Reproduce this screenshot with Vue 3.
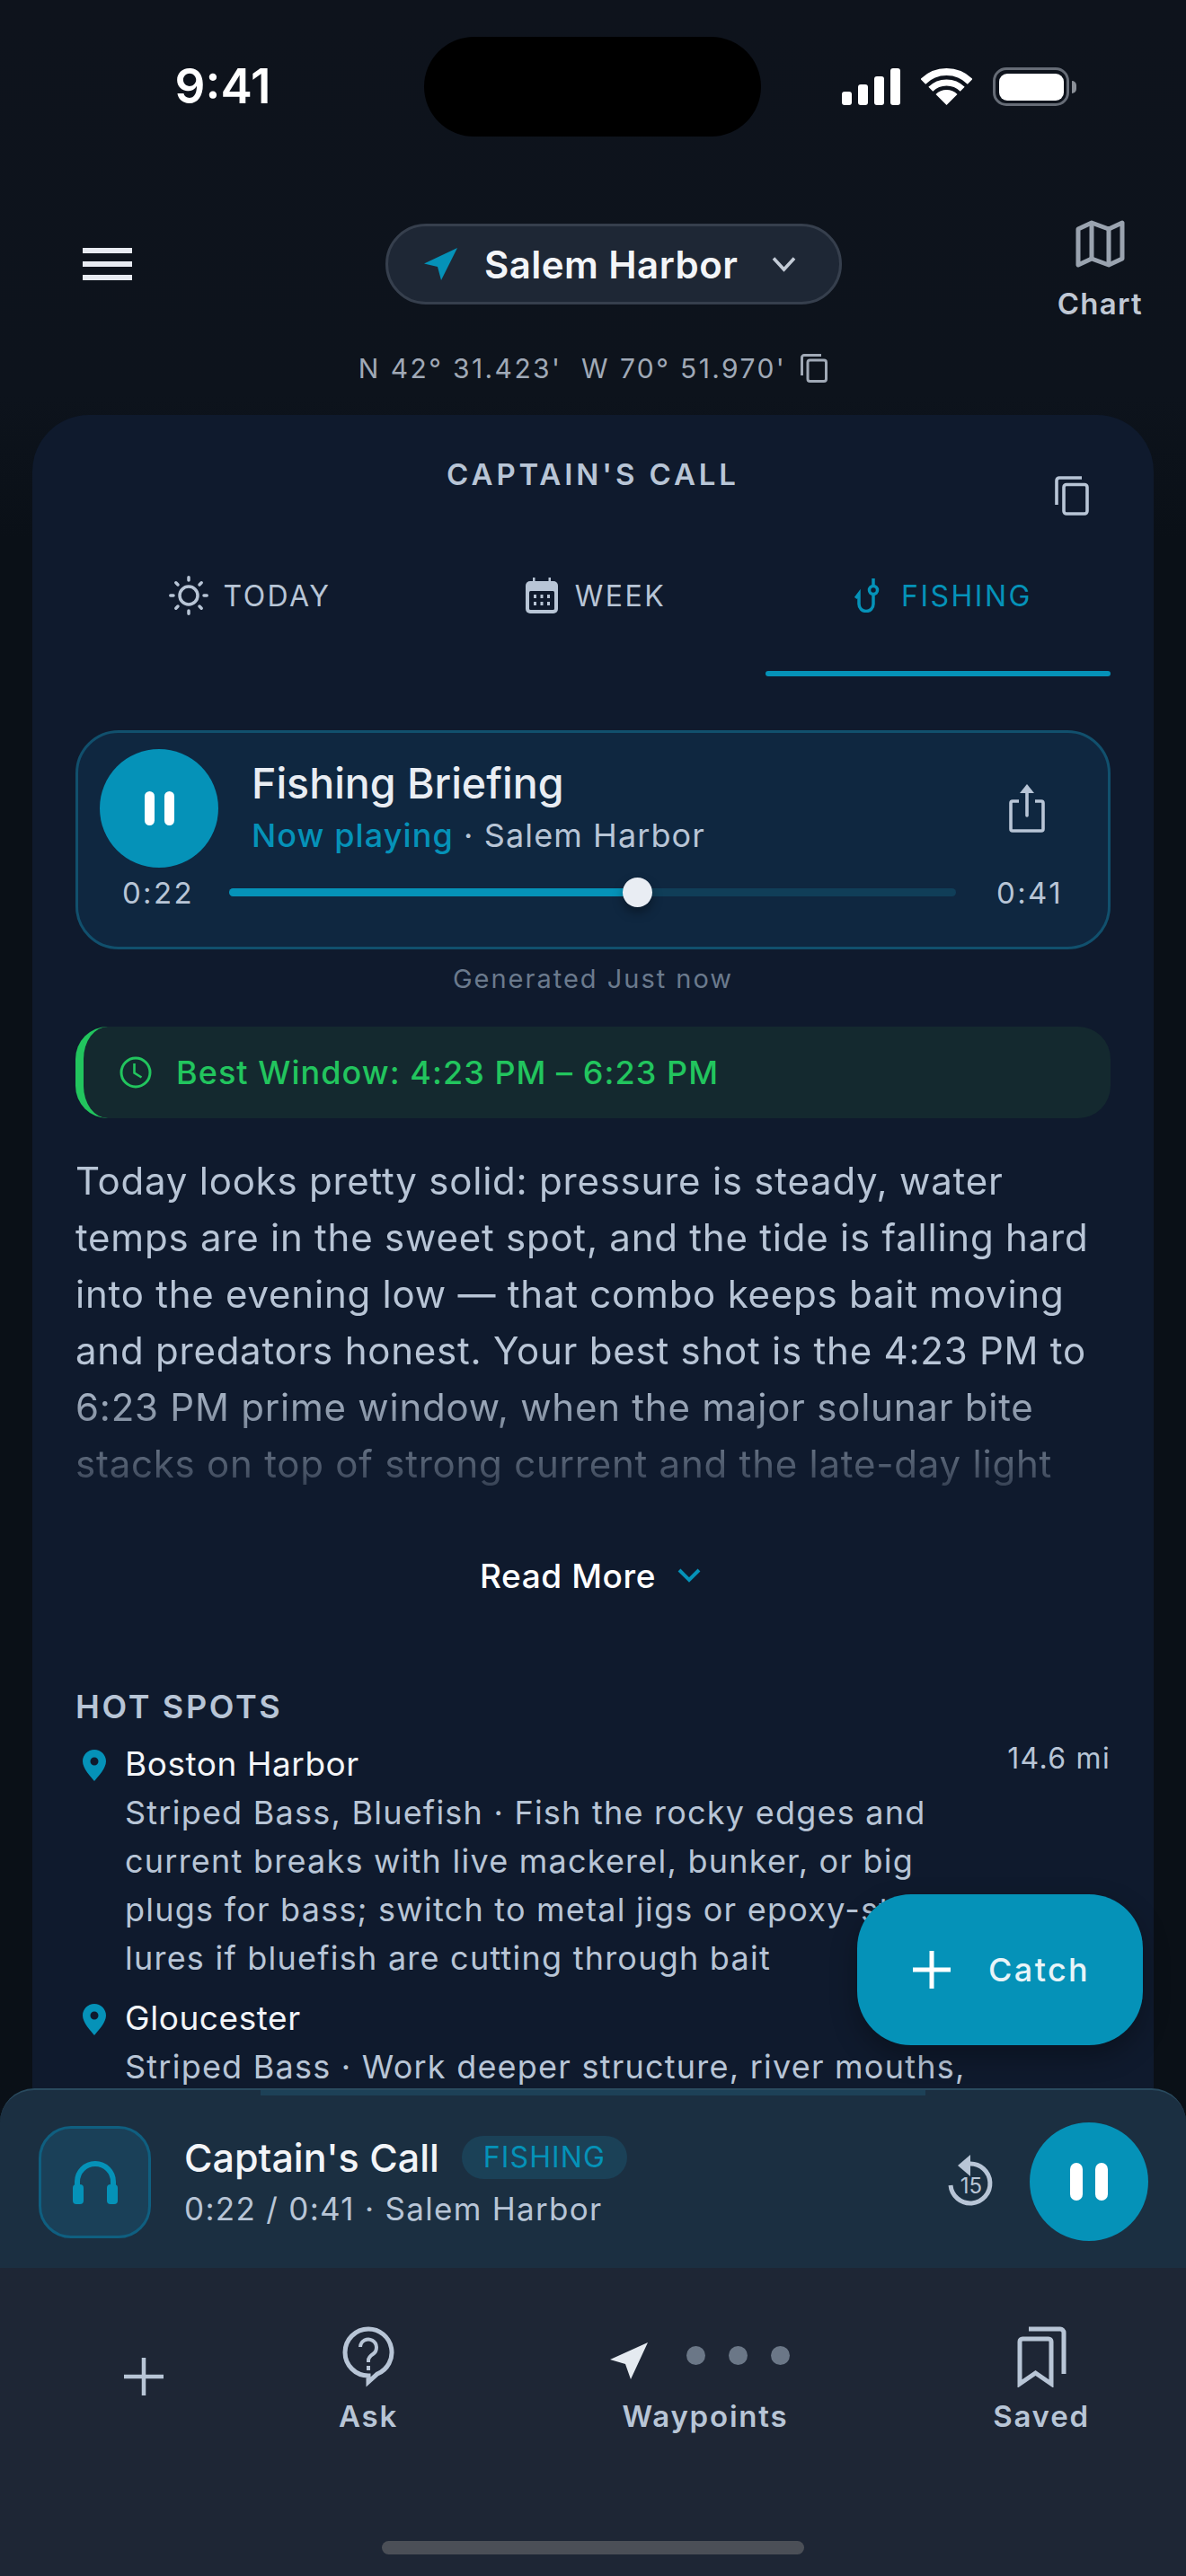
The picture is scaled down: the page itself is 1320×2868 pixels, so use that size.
<script setup>
const spots = [
  { name: 'Boston Harbor', dist: '14.6 mi', desc: "Striped Bass, Bluefish · Fish the rocky edges and current breaks with live mackerel, bunker, or big plugs for bass; switch to metal jigs or epoxy-style lures if bluefish are cutting through bait" },
  { name: 'Gloucester', dist: '', desc: 'Striped Bass · Work deeper structure, river mouths,' }
]
</script>

<template>
  <div class="app">
    <div class="status">
      <div class="time">9:41</div>
      <div class="island"></div>
      <div class="sys">
        <div class="signal"><i class="b1"></i><i class="b2"></i><i class="b3"></i><i class="b4"></i></div>
        <svg class="wifi" width="57" height="41" viewBox="0 0 57 41" fill="none">
          <path d="M2.34 14.84A37 37 0 0 1 54.66 14.84" stroke="#fff" stroke-width="8"/>
          <path d="M10.82 23.32A25 25 0 0 1 46.18 23.32" stroke="#fff" stroke-width="7"/>
          <path d="M28.5 41L16.5 29A17 17 0 0 1 40.5 29Z" fill="#fff"/>
        </svg>
        <div class="battery"><div class="charge"></div></div>
        <div class="nub"></div>
      </div>
    </div>

    <header class="head">
      <div class="burger"><i></i><i></i><i></i></div>
      <div class="pill">
        <svg width="37" height="36" viewBox="0 0 37 36"><path d="M37 0L0 17.5L15 21L19 36Z" fill="#0592b8"/></svg>
        <span class="pill-name">Salem Harbor</span>
        <svg width="27" height="18" viewBox="0 0 27 18" fill="none"><path d="M2 2.5L13.5 15L25 2.5" stroke="#c3cbd6" stroke-width="3.6"/></svg>
      </div>
      <div class="chart">
        <svg width="55" height="53" viewBox="0 0 55 53" fill="none" stroke="#9aa3af" stroke-width="5" stroke-linejoin="round">
          <path d="M3 10L18 3L37 10L52 3V43L37 50L18 43L3 50Z"/><path d="M18 3V43M37 10V50"/>
        </svg>
        <span>Chart</span>
      </div>
    </header>

    <div class="coords">
      <span>N 42° 31.423'&nbsp; W 70° 51.970'</span>
      <svg width="30" height="32" viewBox="0 0 30 32" fill="none" stroke="#a0a9b6" stroke-width="3">
        <rect x="8" y="7" width="20.500" height="23.500" rx="2.500"/><path d="M1.500 24V4a2.500 2.500 0 0 1 2.500-2.500H23"/>
      </svg>
    </div>

    <main class="panel">
      <div class="panel-head">
        <div></div>
        <h1>CAPTAIN'S CALL</h1>
        <svg class="panel-copy" width="38" height="44" viewBox="0 0 38 44" fill="none" stroke="#b8c5d6" stroke-width="3.600">
          <rect x="10" y="9.500" width="26" height="32.500" rx="3"/><path d="M2 32V5a3 3 0 0 1 3-3H30"/>
        </svg>
      </div>

      <div class="tabs">
        <div class="tab">
          <div class="tab-label">
            <svg width="44" height="44" viewBox="0 0 44 44" fill="none" stroke="#b8c5d6" stroke-width="3.500" stroke-linecap="round">
              <circle cx="22" cy="22" r="10"/>
              <path d="M22 1.800V5M22 39V42.200M1.800 22H5M39 22H42.200M7.800 7.800L10 10M34 34L36.200 36.200M7.800 36.200L10 34M34 10L36.200 7.800"/>
            </svg>
            <span>TODAY</span>
          </div>
          <div class="tab-bar"></div>
        </div>
        <div class="tab week">
          <div class="tab-label">
            <svg width="36" height="40" viewBox="0 0 36 40">
              <path d="M8 0h2.500v6H8zM25.500 0H28v6h-2.500z" fill="#b8c5d6"/>
              <rect y="4" width="36" height="36" rx="5" fill="#b8c5d6"/>
              <rect x="4" y="15" width="28" height="21" rx="1.500" fill="#0f1a2d"/>
              <path d="M9 19h3v4H9zM16.500 19h3v4h-3zM24 19h3v4h-3zM9 27h3v4H9zM16.500 27h3v4h-3zM24 27h3v4h-3z" fill="#b8c5d6"/>
            </svg>
            <span>WEEK</span>
          </div>
          <div class="tab-bar"></div>
        </div>
        <div class="tab active">
          <div class="tab-label">
            <svg width="32" height="38" viewBox="0 0 32 38" fill="none" stroke="#0592b8" stroke-width="3.500">
              <path d="M21 0V8.500"/><circle cx="21" cy="13" r="4.500"/>
              <path d="M21 17.500V28.500a8 8 0 0 1-16 0V17L1.200 22"/>
            </svg>
            <span>FISHING</span>
          </div>
          <div class="tab-bar"></div>
        </div>
      </div>

      <section class="card">
        <div class="card-top">
          <div class="play"><i></i><i></i></div>
          <div class="card-text">
            <div class="card-title">Fishing Briefing</div>
            <div class="card-sub"><b>Now playing</b> · Salem Harbor</div>
          </div>
          <svg class="share" width="40" height="54" viewBox="0 0 40 54" fill="none">
            <path d="M20 0L28 10H12Z" fill="#b8c5d6"/>
            <path d="M20 8V35" stroke="#b8c5d6" stroke-width="3.600" stroke-linecap="round"/>
            <path d="M11 19H4a2 2 0 0 0-2 2V50a2 2 0 0 0 2 2H36a2 2 0 0 0 2-2V21a2 2 0 0 0-2-2H29" stroke="#b8c5d6" stroke-width="3.600"/>
          </svg>
        </div>
        <div class="card-progress">
          <span class="t-left">0:22</span>
          <div class="track"><div class="fill"></div><div class="thumb"></div></div>
          <span class="t-right">0:41</span>
        </div>
      </section>

      <div class="generated">Generated Just now</div>

      <div class="best">
        <svg width="36" height="36" viewBox="0 0 36 36" fill="none" stroke="#22c55e" stroke-width="3">
          <circle cx="18" cy="18" r="16"/><path d="M16.500 8V18.500L24.500 23.500" stroke-width="2.600"/>
        </svg>
        <span>Best Window: 4:23 PM – 6:23 PM</span>
      </div>

      <p class="body">Today looks pretty solid: pressure is steady, water temps are in the sweet spot, and the tide is falling hard into the evening low — that combo keeps bait moving and predators honest. Your best shot is the 4:23 PM to 6:23 PM prime window, when the major solunar bite stacks on top of strong current and the late-day light</p>

      <div class="more">
        <span>Read More</span>
        <svg width="26" height="16" viewBox="0 0 26 16" fill="none"><path d="M2 2L13 13L24 2" stroke="#0592b8" stroke-width="4"/></svg>
      </div>

      <h2 class="spots-title">HOT SPOTS</h2>
      <div v-for="s in spots" :key="s.name" class="spot">
        <svg class="pin" width="26" height="35" viewBox="0 0 26 35">
          <path fill-rule="evenodd" d="M13 0C5.800 0 0 5.800 0 13C0 21 9 30 13 35C17 30 26 21 26 13C26 5.800 20.200 0 13 0ZM13 8.500a4.500 4.500 0 1 1 0 9a4.500 4.500 0 0 1 0-9Z" fill="#0592b8"/>
        </svg>
        <div class="spot-body">
          <div class="spot-name">{{ s.name }}</div>
          <div class="spot-desc">{{ s.desc }}</div>
        </div>
        <div class="spot-dist">{{ s.dist }}</div>
      </div>
    </main>

    <section class="player">
      <div class="player-line"></div>
      <div class="player-row">
        <div class="thumbbox">
          <svg width="50" height="50" viewBox="0 0 50 50" fill="none">
            <path d="M5 32V25a20 20 0 0 1 40 0V32" stroke="#0592b8" stroke-width="6"/>
            <rect y="28" width="12" height="22" rx="4" fill="#0592b8"/><rect x="38" y="28" width="12" height="22" rx="4" fill="#0592b8"/>
          </svg>
        </div>
        <div class="player-text">
          <div class="player-title"><span>Captain's Call</span><em>FISHING</em></div>
          <div class="player-sub">0:22 / 0:41 · Salem Harbor</div>
        </div>
        <svg class="replay" width="50" height="58" viewBox="0 0 50 58" fill="none">
          <path d="M24 10A22 22 0 1 1 3 34" stroke="#b8c5d6" stroke-width="5"/>
          <path d="M25 0V24L11 12Z" fill="#b8c5d6"/>
          <text x="26" y="43" text-anchor="middle" font-family="Inter" font-size="24" fill="#b8c5d6">15</text>
        </svg>
        <div class="play small"><i></i><i></i></div>
      </div>
    </section>

    <nav class="nav">
      <div class="nav-item plus">
        <svg width="44" height="42" viewBox="0 0 44 42" fill="none"><path d="M22 0V42M0 21H44" stroke="#b8c5d6" stroke-width="4.500"/></svg>
      </div>
      <div class="nav-item">
        <svg width="58" height="68" viewBox="0 0 58 68" fill="none" stroke="#b8c5d6" stroke-width="5">
          <path d="M29 3a26 26 0 0 1 10 50L29 62V55A26 26 0 0 1 29 3Z"/>
          <path d="M20 23a9 9 0 1 1 14 8c-3 2-5 4-5 7v2" stroke-width="4"/>
          <path d="M29 44v5" stroke-width="4"/>
        </svg>
        <span>Ask</span>
      </div>
      <div class="nav-item">
        <div class="way">
          <svg width="42" height="41" viewBox="0 0 42 41"><path d="M42 0L0 19L17 24L23 41Z" fill="#e5eaf0"/></svg>
          <i></i><i></i><i></i>
        </div>
        <span>Waypoints</span>
      </div>
      <div class="nav-item">
        <svg width="55" height="68" viewBox="0 0 55 68" fill="none" stroke="#b8c5d6" stroke-width="5">
          <path d="M3 64V17a3 3 0 0 1 3-3H35a3 3 0 0 1 3 3V64L20.500 52Z"/>
          <path d="M13 3H48a4 4 0 0 1 4 4V53"/>
        </svg>
        <span>Saved</span>
      </div>
    </nav>
    <div class="homebar"></div>

    <button class="fab">
      <svg width="42" height="42" viewBox="0 0 42 42" fill="none"><path d="M21 0V42M0 21H42" stroke="#fff" stroke-width="5"/></svg>
      <span>Catch</span>
    </button>
  </div>
</template>

<style>
html, body { margin: 0; background: #0d131c; }
</style>

<style scoped>
* { box-sizing: border-box; }
.app {
  position: relative;
  width: 1320px;
  height: 2868px;
  display: flex;
  flex-direction: column;
  overflow: hidden;
  background: linear-gradient(#0e131c 0, #0d131c 440px, #0a1017 600px);
  font-family: Inter, "Noto Sans", sans-serif;
  color: #fff;
}
.status {
  flex: none;
  height: 152px;
  padding-top: 41px;
  display: grid;
  grid-template-columns: 472px 375px 473px;
  align-items: center;
}
.time { font-size: 53px; font-weight: 600; text-align: center; padding-left: 24px; height: 111px; line-height: 111px; }
.island { height: 111px; border-radius: 56px; background: #000; }
.sys { display: flex; align-items: center; padding-left: 90px; height: 111px; }
.signal { display: flex; align-items: flex-end; gap: 7px; height: 41px; }
.signal i { display: block; width: 11px; border-radius: 3px; background: #fff; }
.b1 { height: 15px; } .b2 { height: 23px; } .b3 { height: 32px; } .b4 { height: 41px; }
.wifi { margin-left: 23px; }
.battery { margin-left: 23px; width: 85px; height: 43px; border: 3.500px solid #666c76; border-radius: 15px; padding: 3.500px; }
.charge { width: 100%; height: 100%; background: #fff; border-radius: 9px; }
.nub { width: 5px; height: 14px; margin-left: 3px; background: #8a8f97; border-radius: 0 6px 6px 0; }

.head {
  flex: none;
  margin-top: 93px;
  height: 98px;
  display: grid;
  grid-template-columns: 429px 508px 1fr;
  grid-template-rows: 98px;
}
.burger { margin-left: 92px; width: 55px; align-self: center; display: flex; flex-direction: column; gap: 9px; }
.burger i { display: block; height: 6px; background: #e7eaf1; }
.pill {
  height: 90px;
  margin-top: 4px;
  border: 3px solid #363f4d;
  border-radius: 45px;
  background: #1e2735;
  display: flex;
  align-items: center;
  padding-left: 40px;
}
.pill-name { font-size: 42px; font-weight: 600; letter-spacing: .45px; margin-left: 30px; margin-right: 38px; white-space: nowrap; color: #f3f5f8; }
.chart { justify-self: end; margin-right: 48px; height: 113px; display: flex; flex-direction: column; align-items: center; }
.chart svg { flex: none; }
.chart span { font-size: 33px; font-weight: 600; color: #c0c8d4; letter-spacing: 1.300px; line-height: 40px; margin-top: 20px; }

.coords {
  flex: none;
  margin-top: 47px;
  height: 40px;
  display: flex;
  justify-content: center;
  align-items: center;
  gap: 16px;
  font-size: 30px;
  letter-spacing: 2.400px;
  color: #a0a9b6;
}

.panel {
  flex: 1;
  min-height: 0;
  margin: 32px 36px 0;
  padding: 46px 48px 0;
  background: #0f1a2d;
  border-radius: 63px 63px 0 0;
  overflow: hidden;
}
.panel-head { display: grid; grid-template-columns: 1fr auto 1fr; height: 66px; }
.panel-head h1 { margin: 0; font-size: 33px; line-height: 40px; font-weight: 600; letter-spacing: 3.900px; color: #b8c5d6; }
.panel-copy { justify-self: end; margin-top: 22px; margin-right: 24px; }
.tabs { display: grid; grid-template-columns: repeat(3, 1fr); }
.tab { padding-top: 60px; }
.tab-label { height: 58px; display: flex; align-items: center; justify-content: center; gap: 16px; padding-left: 5px; font-size: 32px; font-weight: 400; letter-spacing: 2.500px; color: #b8c5d6; }
.tab.week .tab-label { gap: 19px; padding-left: 6px; }
.tab.active .tab-label { color: #0592b8; gap: 20px; padding-left: 12px; }
.tab-bar { height: 6px; margin-top: 55px; border-radius: 3px; }
.tab.active .tab-bar { background: #0592b8; }

.card {
  margin-top: 60px;
  height: 244px;
  border: 3px solid #11506d;
  border-radius: 48px;
  background: #0f2740;
  padding: 18px 17px 0 24px;
}
.card-top { display: flex; align-items: center; }
.play {
  flex: none;
  width: 132px;
  height: 132px;
  border-radius: 50%;
  background: #0592b8;
  display: flex;
  align-items: center;
  justify-content: center;
  gap: 11px;
}
.play i { display: block; width: 11px; height: 38px; border-radius: 6px; background: #fff; }
.card-text { flex: 1; margin-left: 37px; }
.card-title { font-size: 46.500px; font-weight: 500; line-height: 54px; color: #e9edf3; }
.card-sub { margin-top: 5px; font-size: 36px; line-height: 52px; letter-spacing: 1.100px; color: #b8c5d6; }
.card-sub b { font-weight: 500; color: #0592b8; }
.share { margin-right: 53px; }
.card-progress { display: flex; align-items: center; gap: 12px; height: 45px; margin-top: 5px; font-size: 33px; letter-spacing: 2.400px; color: #b8c5d6; }
.t-left { width: 132px; text-align: center; padding-right: 2px; }
.t-right { width: 140px; text-align: center; }
.track { flex: 1; height: 9px; border-radius: 5px; background: #103e58; display: flex; align-items: center; }
.fill { width: 454px; height: 9px; border-radius: 5px 0 0 5px; background: #0592b8; flex: none; }
.thumb { flex: none; width: 33px; height: 33px; margin-left: -16px; border-radius: 50%; background: #e9edf3; box-shadow: 0 6px 12px rgba(0,0,0,.35); }

.generated { margin-top: 13px; height: 40px; line-height: 40px; text-align: center; font-size: 29px; letter-spacing: 2px; color: #6b7a8d; }

.best {
  margin-top: 33px;
  height: 102px;
  border-left: 9px solid #22c55e;
  border-radius: 36px;
  background: #14292f;
  display: flex;
  align-items: center;
  padding-left: 40px;
  gap: 27px;
  font-size: 36px;
  font-weight: 500;
  letter-spacing: 1.050px;
  color: #22c55e;
}

.body {
  margin: 38px 0 0;
  font-size: 42px;
  line-height: 63px;
  letter-spacing: .77px;
  color: #b8c5d6;
  height: 378px;
  -webkit-mask-image: linear-gradient(#000 66%, rgba(0,0,0,.2) 100%);
  mask-image: linear-gradient(#000 66%, rgba(0,0,0,.2) 100%);
}
.more { margin-top: 68px; height: 50px; display: flex; align-items: center; justify-content: center; gap: 24px; padding-right: 6px; font-size: 37px; font-weight: 500; color: #fff; letter-spacing: .6px; }

.spots-title { margin: 99px 0 15px; font-size: 36px; line-height: 44px; font-weight: 600; letter-spacing: 2.650px; color: #b8c5d6; }
.spot { display: flex; margin-bottom: 13px; }
.pin { flex: none; margin: 11px 21px 0 8px; }
.spot-body { width: 950px; flex: none; }
.spot-name { font-size: 37px; line-height: 54px; letter-spacing: .55px; color: #f3f5f8; }
.spot-desc { font-size: 36px; line-height: 54px; letter-spacing: 1.230px; color: #b8c5d6; }
.spot-dist { flex: 1; text-align: right; font-size: 32px; line-height: 42px; letter-spacing: 1.300px; color: #b8c5d6; white-space: nowrap; }

.player {
  flex: none;
  height: 200px;
  border-top: 2px solid #2a4a5e;
  border-radius: 38px 38px 0 0;
  background: #1b2f41;
  display: flex;
  flex-direction: column;
}
.player-line { flex: none; width: 740px; height: 6px; margin: 0 auto; background: #1d4157; }
.player-row { flex: 1; display: flex; align-items: center; padding: 0 42px 0 43px; }
.thumbbox {
  flex: none;
  width: 125px;
  height: 125px;
  border: 3px solid #0f5f80;
  border-radius: 36px;
  background: #1a4058;
  display: flex;
  align-items: center;
  justify-content: center;
}
.player-text { flex: 1; margin-left: 37px; }
.player-title { display: flex; align-items: center; height: 54px; font-size: 43px; font-weight: 500; color: #f3f5f8; }
.player-title em { font-style: normal; font-size: 32px; font-weight: 400; letter-spacing: 1.100px; color: #0592b8; background: #1b4157; border-radius: 24px; height: 48px; line-height: 48px; padding: 0 24px; margin-left: 25px; }
.player-sub { margin-top: 6px; line-height: 48px; font-size: 35px; letter-spacing: 1.300px; color: #b8c5d6; }
.replay { flex: none; margin-right: 41px; margin-top: -2px; }
.play.small { gap: 14px; }
.play.small i { width: 14px; height: 42px; border-radius: 7px; }

.nav {
  flex: none;
  height: 343px;
  background: #1e2635;
  display: grid;
  grid-template-columns: 320px 180px 570px 178px;
  padding-top: 65px;
  align-content: start;
}
.nav-item { display: flex; flex-direction: column; align-items: center; }
.nav-item > span { margin-top: 12px; font-size: 33px; line-height: 40px; font-weight: 600; letter-spacing: 1.800px; color: #b8c5d6; }
.nav-item.plus { padding-top: 35px; }
.way { height: 68px; display: flex; align-items: flex-start; margin-right: 12px; }
.way svg { margin-top: 18px; margin-right: 43px; }
.way i { display: block; width: 21px; height: 21px; margin-top: 22px; margin-right: 26px; border-radius: 50%; background: #6b7787; }
.way i:last-child { margin-right: 0; }
.homebar { position: absolute; left: 425px; top: 2829px; width: 470px; height: 15px; border-radius: 8px; background: #4b4f57; }

.fab {
  position: absolute;
  left: 954px;
  top: 2109px;
  width: 318px;
  height: 168px;
  border: none;
  border-radius: 60px;
  background: #0592b8;
  box-shadow: 0 12px 30px rgba(0,0,0,.3);
  display: flex;
  align-items: center;
  padding: 0 0 0 62px;
  gap: 42px;
  font-family: inherit;
  font-size: 36px;
  font-weight: 500;
  letter-spacing: 2.400px;
  color: #e8f4f8;
}
</style>
